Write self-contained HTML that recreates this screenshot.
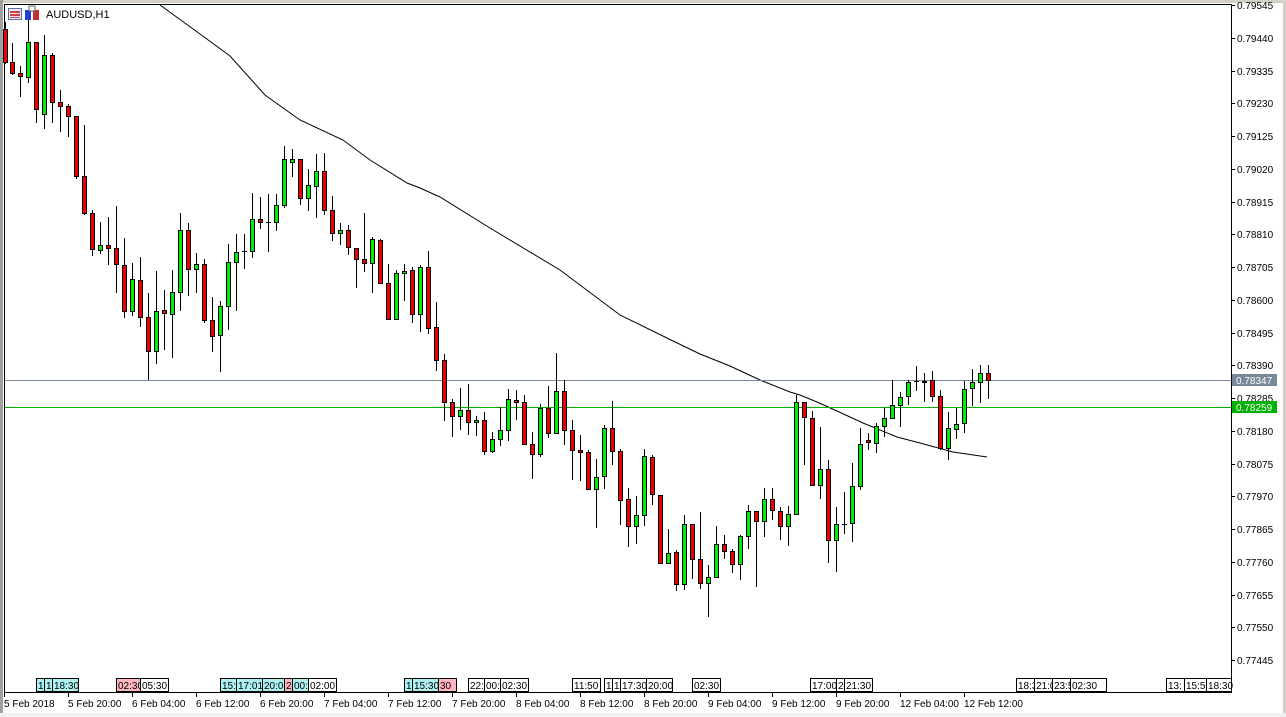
<!DOCTYPE html>
<html><head><meta charset="utf-8"><style>
html,body{margin:0;padding:0;background:#f0f0f0;}
body{width:1286px;height:717px;overflow:hidden;position:relative;font-family:"Liberation Sans",sans-serif;}
svg{position:absolute;left:0;top:0}
</style></head><body>
<svg id="s" width="1286" height="717" xmlns="http://www.w3.org/2000/svg" font-family="Liberation Sans, sans-serif" font-size="10"></svg>
<script>
var NS="http://www.w3.org/2000/svg",s=document.getElementById('s'),h='';
h+='<rect x="0" y="0" width="1286" height="713" fill="#fff"/>';
h+='<rect x="0" y="0" width="1286" height="3" fill="#d4d0c8"/>';
h+='<rect x="0" y="0" width="3" height="713" fill="#a0a0a0"/>';
h+='<rect x="1283" y="0" width="3" height="713" fill="#d4d0c8"/>';
h+='<rect x="0" y="713" width="1286" height="4" fill="#f0f0f0"/>';
h+='<rect x="4.5" y="4.5" width="1227" height="688" fill="none" stroke="#000"/>';
// candles: x,hi,top,bot,lo,green
var C=[[5,22,29,62,64,0],[12,43,62,73,75,0],[20,66,73,76,97,0],[28,20,42,77,83,1],[36,42,42,109,123,0],[44,35,55,114,129,1],[52,53,55,102,123,0],[60,90,102,106,132,0],[68,104,106,116,137,0],[76,116,116,176,179,0],[84,125,176,213,215,0],[92,210,213,249,256,0],[100,222,245,250,254,1],[108,217,245,248,265,0],[116,206,248,264,293,0],[124,238,265,311,318,0],[132,263,279,311,316,1],[140,257,280,317,327,0],[148,293,317,351,380,0],[156,271,311,351,364,1],[164,290,310,313,350,0],[172,270,292,314,358,1],[180,213,230,292,311,1],[188,223,230,269,296,0],[196,253,264,269,293,1],[204,259,264,320,323,0],[212,297,320,336,352,0],[220,301,306,335,372,1],[228,244,262,306,330,1],[236,234,252,262,311,1],[244,234,251,251,269,1],[252,193,219,251,258,1],[260,197,219,222,229,0],[268,194,222,222,252,1],[276,194,205,222,231,1],[284,146,159,205,208,1],[292,149,159,162,177,1],[300,159,159,198,205,0],[308,169,185,198,211,1],[316,154,171,186,218,1],[324,153,171,210,215,0],[332,196,210,233,241,0],[340,223,230,233,245,1],[348,225,230,247,255,0],[356,248,248,259,288,0],[364,213,259,263,272,0],[372,237,239,263,293,1],[380,239,240,283,284,0],[388,264,283,319,319,0],[396,270,273,319,320,1],[404,264,271,273,301,1],[412,267,270,314,323,0],[420,265,267,314,332,1],[428,251,267,328,334,0],[436,302,327,360,371,0],[444,354,360,402,421,0],[452,399,402,416,437,0],[460,388,410,416,430,1],[468,384,410,422,435,0],[476,416,420,422,436,1],[484,412,420,451,455,0],[492,432,439,451,453,1],[500,407,430,439,446,1],[508,389,399,430,441,1],[516,390,400,402,420,0],[524,395,402,444,445,0],[532,432,444,454,479,0],[540,404,408,454,457,1],[548,386,408,433,438,0],[556,353,391,433,434,1],[564,380,391,430,445,0],[572,420,430,450,480,0],[580,435,450,452,481,0],[588,450,452,489,489,0],[596,459,477,489,528,1],[604,425,428,476,489,1],[612,401,428,451,465,0],[620,449,451,500,525,0],[628,488,499,526,547,0],[636,496,515,526,544,1],[644,449,456,515,526,1],[652,455,457,494,505,0],[660,495,495,563,564,0],[668,529,553,563,563,1],[676,550,552,584,591,0],[684,515,524,584,590,1],[692,524,524,559,579,0],[700,512,559,583,589,0],[708,565,577,583,617,1],[716,526,544,577,578,1],[724,535,544,551,559,0],[732,549,551,564,573,0],[740,535,536,564,580,1],[748,505,511,536,549,1],[756,511,511,521,587,0],[764,488,499,521,537,1],[772,488,499,510,520,0],[780,507,511,526,540,0],[788,506,514,526,546,1],[796,395,402,514,514,1],[804,402,402,417,465,0],[812,411,418,485,485,0],[820,427,469,485,499,1],[828,460,469,540,563,0],[836,507,524,540,572,1],[844,492,524,524,534,1],[852,463,486,523,542,1],[860,428,444,486,490,1],[868,433,440,442,450,0],[876,423,426,443,453,1],[884,408,418,426,437,1],[892,380,405,418,418,1],[900,392,397,405,427,1],[908,380,382,396,405,1],[916,366,381,381,391,1],[924,373,381,382,402,0],[932,371,380,396,402,0],[940,390,396,448,450,0],[948,412,428,448,460,1],[956,408,424,429,439,1],[964,381,389,423,433,1],[972,369,382,388,406,1],[980,365,373,382,403,1],[988,365,373,380,399,0]];
// MA
h+='<polyline fill="none" stroke="#000" stroke-width="1" points="160,5 200,34 230,56 265,95 300,120 343,140 370,160 407,183 420,188 440,197 490,228 560,270 620,315 671,340 700,354 730,366 760,380 790,392 800,395 817,402 837,411 863,423 897,437 920,443 953,452 987,457"/>';
// hlines
h+='<line x1="5" y1="380.5" x2="1231" y2="380.5" stroke="#778899"/>';
h+='<line x1="5" y1="407.5" x2="1231" y2="407.5" stroke="#00b000"/>';
C.forEach(function(c){var x=c[0];
h+='<line x1="'+(x+.5)+'" y1="'+c[1]+'" x2="'+(x+.5)+'" y2="'+c[4]+'" stroke="#000"/>';
var t=c[2],b=c[3];if(b-t<1){h+='<line x1="'+(x-2)+'" y1="'+(t+.5)+'" x2="'+(x+3)+'" y2="'+(t+.5)+'" stroke="#000"/>';}
else h+='<rect x="'+(x-1.5)+'" y="'+(t+.5)+'" width="4" height="'+(b-t)+'" fill="'+(c[5]?'#00ee00':'#ee0000')+'" stroke="#000"/>';});
// price axis
var P=["0.79545","0.79440","0.79335","0.79230","0.79125","0.79020","0.78915","0.78810","0.78705","0.78600","0.78495","0.78390","0.78285","0.78180","0.78075","0.77970","0.77865","0.77760","0.77655","0.77550","0.77445"];
P.forEach(function(p,i){var y=Math.round(5+i*32.75);
h+='<line x1="1231" y1="'+(y+.5)+'" x2="1235" y2="'+(y+.5)+'" stroke="#000"/>';
h+='<text x="1237" y="'+(y+4)+'" fill="#000">'+p+'</text>';});
h+='<rect x="1232" y="374" width="45" height="12" fill="#778899"/><text x="1236" y="384" fill="#fff">0.78347</text>';
h+='<rect x="1232" y="401" width="45" height="12" fill="#00b000"/><text x="1236" y="411" fill="#fff">0.78259</text>';
// time axis
var T=[[4,"5 Feb 2018"],[68,"5 Feb 20:00"],[132,"6 Feb 04:00"],[196,"6 Feb 12:00"],[260,"6 Feb 20:00"],[324,"7 Feb 04:00"],[388,"7 Feb 12:00"],[452,"7 Feb 20:00"],[516,"8 Feb 04:00"],[580,"8 Feb 12:00"],[644,"8 Feb 20:00"],[708,"9 Feb 04:00"],[772,"9 Feb 12:00"],[836,"9 Feb 20:00"],[900,"12 Feb 04:00"],[964,"12 Feb 12:00"]];
T.forEach(function(t){h+='<line x1="'+(t[0]+.5)+'" y1="692" x2="'+(t[0]+.5)+'" y2="697" stroke="#000"/><text x="'+t[0]+'" y="707" fill="#000">'+t[1]+'</text>';});
// event labels
var E=[[36,8,"1","#aef0f0"],[44,8,"1","#aef0f0"],[52,26,"18:30","#aef0f0"],[116,24,"02:30","#ffb6c1"],[140,28,"05:30","#fff"],[220,16,"15:","#aef0f0"],[236,26,"17:01","#aef0f0"],[262,22,"20:00","#aef0f0"],[284,8,"2","#ffb6c1"],[292,16,"00:","#aef0f0"],[308,28,"02:00","#fff"],[404,8,"1","#aef0f0"],[412,26,"15:30","#aef0f0"],[438,18,"30","#ffb6c1"],[468,16,"22:","#fff"],[484,16,"00:","#fff"],[500,28,"02:30","#fff"],[572,28,"11:50","#fff"],[604,8,"1","#fff"],[612,8,"1","#fff"],[620,26,"17:30","#fff"],[646,26,"20:00","#fff"],[692,28,"02:30","#fff"],[810,26,"17:00","#fff"],[836,8,"2","#fff"],[844,28,"21:30","#fff"],[1016,18,"18:3","#fff"],[1034,18,"21:0","#fff"],[1052,18,"23:5","#fff"],[1070,36,"02:30","#fff"],[1166,18,"13:","#fff"],[1184,22,"15:5","#fff"],[1206,25,"18:30","#fff"]];
E.forEach(function(e){h+='<rect x="'+(e[0]+.5)+'" y="678.5" width="'+e[1]+'" height="13" fill="'+e[3]+'" stroke="#000"/><text x="'+(e[0]+2)+'" y="689" fill="#000" font-size="10">'+e[2]+'</text>';});
// header icons
h+='<rect x="8.5" y="8.5" width="13" height="11" fill="#e8e8f8" stroke="#6070a0"/><rect x="10" y="11" width="10" height="2" fill="#d04040"/><rect x="10" y="14" width="10" height="2" fill="#d04040"/><rect x="10" y="17" width="10" height="1" fill="#d04040"/>';
h+='<rect x="25" y="10" width="6" height="10" fill="#2040d0"/><rect x="33" y="10" width="6" height="10" fill="#c03030"/><rect x="29" y="6" width="6" height="5" fill="#fff" stroke="#666"/>';
h+='<text x="46" y="18" font-size="11" fill="#000">AUDUSD,H1</text>';
s.innerHTML=h;
</script>
</body></html>
